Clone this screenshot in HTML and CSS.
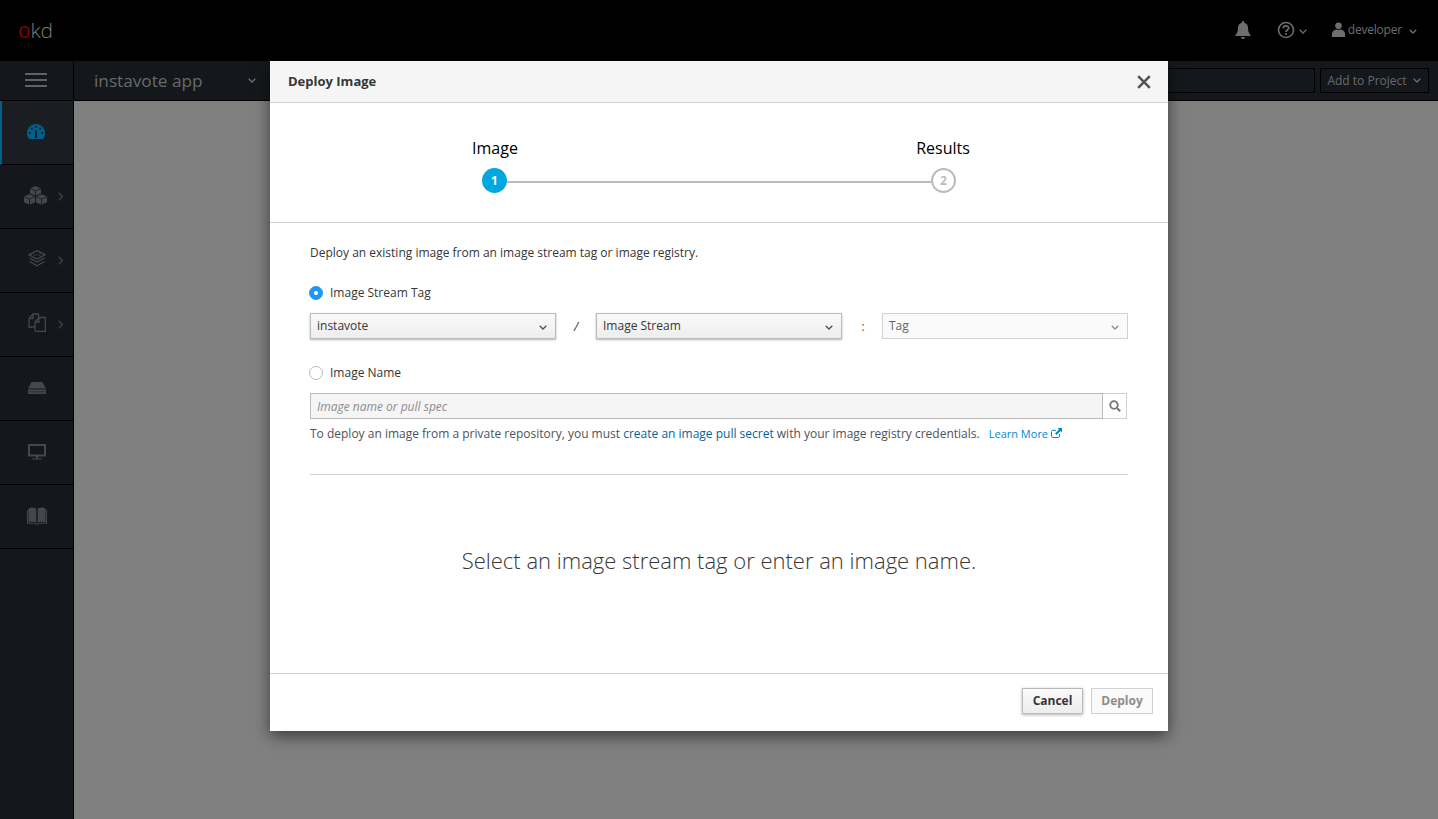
FILE: index.html
```html
<!DOCTYPE html>
<html lang="en">
<head>
<meta charset="utf-8">
<title>Deploy Image</title>
<link rel="stylesheet" href="styles.css">
</head>
<body>
<div class="page">
  <header class="topbar">
    <div class="logo"><span class="logo-o">o</span>kd</div>
    <div class="top-actions">
      <svg class="bell" viewBox="0 0 16 18" width="16" height="18"><path fill="#6e6e6e" d="M8 0c-.7 0-1.2.5-1.2 1.2v.6C4.300 2.400 3 4.400 3 6.800c0 3.700-.8 5.500-2.600 7.200v1h15.200v-1C13.800 12.300 13 10.500 13 6.800c0-2.400-1.300-4.400-3.800-5V1.200C9.200.5 8.700 0 8 0zM6 16c0 1.100.9 2 2 2s2-.9 2-2z"/></svg>
      <span class="help-group">
        <svg viewBox="0 0 18 18" width="18" height="18"><circle cx="9" cy="9" r="7.500" fill="none" stroke="#6e6e6e" stroke-width="1.600"/><path fill="none" stroke="#6e6e6e" stroke-width="1.700" d="M6.300 7.200c0-3.200 5.400-3.200 5.400-.1 0 2-2.700 1.900-2.700 4"/><rect x="8.100" y="12" width="1.800" height="1.800" fill="#6e6e6e"/></svg>
        <svg class="chev" viewBox="0 0 8 5" width="8" height="5"><path d="M.7.700 4 4 7.300.7" fill="none" stroke="#6e6e6e" stroke-width="1.300"/></svg>
      </span>
      <span class="user-group">
        <svg viewBox="0 0 13 15" width="13" height="15"><circle cx="6.500" cy="3.700" r="3.300" fill="#6e6e6e"/><path fill="#6e6e6e" d="M0 15v-3.500C0 9 2.500 7.600 4.500 7.400c1.200.6 2.800.6 4 0 2 .2 4.500 1.600 4.500 4.100V15z"/></svg>
        <span class="user-name">developer</span>
        <svg class="chev" viewBox="0 0 8 5" width="8" height="5"><path d="M.7.700 4 4 7.300.7" fill="none" stroke="#6e6e6e" stroke-width="1.300"/></svg>
      </span>
    </div>
  </header>
  <div class="subbar">
    <div class="burger-cell"><span class="burger"></span></div>
    <div class="project">
      <span class="project-name">instavote app</span>
      <svg class="chev" viewBox="0 0 8 5" width="8" height="5"><path d="M.7.700 4 4 7.300.7" fill="none" stroke="#6e6e6e" stroke-width="1.300"/></svg>
    </div>
    <div class="sub-tools">
      <div class="search-box"></div>
      <div class="add-btn">Add to Project
        <svg class="chev" viewBox="0 0 8 5" width="8" height="5"><path d="M.7.700 4 4 7.300.7" fill="none" stroke="#6e6e6e" stroke-width="1.300"/></svg>
      </div>
    </div>
  </div>
  <div class="main">
    <nav class="sidebar">
      <div class="nav-item active">
        <svg viewBox="0 0 18 15" width="18" height="15"><path fill="#00608c" d="M9 0C4 0 0 4 0 9c0 2.200.8 4.300 2.100 5.900h13.800C17.200 13.300 18 11.200 18 9c0-5-4-9-9-9z"/><g fill="#14181c"><circle cx="9" cy="2.700" r="1"/><circle cx="4.700" cy="4.600" r="1"/><circle cx="13.300" cy="4.600" r="1"/><circle cx="2.800" cy="9" r="1"/><circle cx="15.200" cy="9" r="1"/><path d="M8.300 6h1.400l.4 6.200a1.200 1.200 0 1 1-2.200 0z"/></g></svg>
      </div>
      <div class="nav-item">
        <svg class="icon-cubes" viewBox="0 0 23 19" width="23" height="19"><g fill="#44474b"><path d="M11.500 0 17 2.400v5L11.500 9.800 6 7.400v-5z"/><path d="M5.500 8.200 11 10.600v5.600l-5.500 2.600L0 16.200v-5.600z"/><path d="M17.500 8.200 23 10.600v5.600l-5.500 2.600-5.500-2.600v-5.600z"/></g><g fill="none" stroke="#14181c" stroke-width=".8"><path d="M6 2.400 11.500 4.800 17 2.400M11.500 4.800v5M0 10.600l5.500 2.400 5.500-2.400M5.500 13v5.800M12 10.600l5.500 2.400 5.500-2.400M17.500 13v5.800"/></g></svg>
        <svg class="nav-chev" viewBox="0 0 5 9" width="5" height="9"><path d="M.7.700 4.300 4.500.7 8.300" fill="none" stroke="#44474b" stroke-width="1.200"/></svg>
      </div>
      <div class="nav-item">
        <svg class="icon-up" viewBox="0 0 18 17" width="18" height="17"><g fill="none" stroke="#44474b" stroke-width="1.300"><path d="M9 .7 17 4.800 9 9 1 4.800z"/><path d="M1.500 8 9 12l7.500-4"/><path d="M1.500 11.500 9 15.800l7.500-4.300"/></g><g fill="#44474b"><rect x="5.500" y="4.300" width="1.500" height="1.200"/><rect x="8.300" y="4.300" width="1.500" height="1.200"/><rect x="11" y="4.300" width="1.500" height="1.200"/></g></svg>
        <svg class="nav-chev" viewBox="0 0 5 9" width="5" height="9"><path d="M.7.700 4.300 4.500.7 8.300" fill="none" stroke="#44474b" stroke-width="1.200"/></svg>
      </div>
      <div class="nav-item">
        <svg class="icon-up" viewBox="0 0 18 19" width="18" height="19"><g fill="none" stroke="#44474b" stroke-width="1.300"><path d="M7 14H1V5.500L5 1h5.500v3.500"/><path d="M7 15V9l4-4.500h6.300v13.800H8.300A1.300 1.300 0 0 1 7 17z"/><path d="M5 1v4.500H1M11 4.500V9H7"/></g></svg>
        <svg class="nav-chev" viewBox="0 0 5 9" width="5" height="9"><path d="M.7.700 4.300 4.500.7 8.300" fill="none" stroke="#44474b" stroke-width="1.200"/></svg>
      </div>
      <div class="nav-item">
        <svg viewBox="0 0 18 12" width="18" height="12"><path fill="#44474b" d="M3.500 0h11L18 6.500H0zM0 7.500h18V12H0z"/><path stroke="#14181c" stroke-width="1" stroke-dasharray="1 1" d="M1.500 9.800h15"/></svg>
      </div>
      <div class="nav-item">
        <svg viewBox="0 0 18 16" width="18" height="16"><path fill="#44474b" fill-rule="evenodd" d="M0 0h18v12.500H0zM2 2v8.500h14V2zM8 12.500h2V14.500H8zM4 14.500h10V15.500H4z"/></svg>
      </div>
      <div class="nav-item">
        <svg viewBox="0 0 20 18" width="20" height="18"><path fill="#44474b" d="M1.500 1.500C4 .2 7 .3 9.300 1.800v14C7 14.600 4 14.500 1.500 15.500zM18.500 1.500C16 .2 13 .3 10.700 1.800v14c2.300-1.200 5.300-1.300 7.800-.3z"/><path fill="none" stroke="#44474b" stroke-width="1" d="M.5 3v13.500c3-.6 6-.6 9.500.8 3.500-1.400 6.500-1.400 9.500-.8V3"/></svg>
      </div>
    </nav>
    <div class="backdrop-area"></div>
  </div>

  <section class="modal">
    <div class="modal-head">
      <h1 class="modal-title">Deploy Image</h1>
      <svg class="close" viewBox="0 0 14 14" width="14" height="14"><path d="M1.200 1.200 12.800 12.800M12.800 1.200 1.200 12.800" stroke="#555" stroke-width="2.600"/></svg>
    </div>
    <div class="wizard">
      <div class="step">
        <div class="step-label">Image</div>
        <div class="bubble bubble-on">1</div>
      </div>
      <div class="wizard-line"></div>
      <div class="step">
        <div class="step-label">Results</div>
        <div class="bubble bubble-off">2</div>
      </div>
    </div>
    <div class="modal-body">
      <p class="intro">Deploy an existing image from an image stream tag or image registry.</p>
      <div class="radio-row">
        <span class="radio radio-on"></span>
        <span>Image Stream Tag</span>
      </div>
      <div class="select-row">
        <div class="select select-active"><span>instavote</span><svg class="chev" viewBox="0 0 8 5" width="8" height="5"><path d="M.7.700 4 4 7.300.7" fill="none" stroke="#4d5258" stroke-width="1.300"/></svg></div>
        <span class="sep sep-slash">/</span>
        <div class="select select-active"><span>Image Stream</span><svg class="chev" viewBox="0 0 8 5" width="8" height="5"><path d="M.7.700 4 4 7.300.7" fill="none" stroke="#4d5258" stroke-width="1.300"/></svg></div>
        <span class="sep sep-colon">:</span>
        <div class="select select-dis"><span>Tag</span><svg class="chev" viewBox="0 0 8 5" width="8" height="5"><path d="M.7.700 4 4 7.300.7" fill="none" stroke="#8b8d8f" stroke-width="1.300"/></svg></div>
      </div>
      <div class="radio-row radio-row-2">
        <span class="radio"></span>
        <span>Image Name</span>
      </div>
      <div class="image-input">
        <div class="image-field">Image name or pull spec</div>
        <div class="image-search"><svg viewBox="0 0 12 12" width="12" height="12"><circle cx="5" cy="5" r="3.800" fill="none" stroke="#72767b" stroke-width="1.800"/><path d="M8 8l3.200 3.200" stroke="#72767b" stroke-width="2"/></svg></div>
      </div>
      <p class="hint">To deploy an image from a private repository, you must <a class="link">create an image pull secret</a> with your image registry credentials. <a class="link learn">Learn More <svg viewBox="0 0 11 10" width="11" height="10"><path fill="none" stroke="#0088ce" stroke-width="1" d="M8.500 6v2.200c0 .7-.5 1.300-1.200 1.300H1.800C1.100 9.500.5 9 .5 8.200V3.500c0-.7.600-1.200 1.300-1.200H5"/><path fill="#0088ce" d="M6.500 0H11v4.500L9.500 3 5.500 7 4 5.500l4-4z"/></svg></a></p>
      <div class="rule"></div>
      <div class="message">Select an image stream tag or enter an image name.</div>
    </div>
    <div class="modal-foot">
      <button class="btn btn-cancel">Cancel</button>
      <button class="btn btn-deploy">Deploy</button>
    </div>
  </section>
</div>
</body>
</html>
```
FILE: styles.css
```css
* { box-sizing: border-box; }
html, body { margin: 0; padding: 0; height: 100%; }
body { font-family: "Open Sans", "Noto Sans", sans-serif; font-size: 12px; color: #363636; background: #808080; overflow: hidden; }
.page { position: relative; width: 1438px; height: 819px; display: flex; flex-direction: column; }

.topbar { height: 61px; background: #000; display: flex; align-items: center; justify-content: space-between; flex: none; }
.logo { margin-left: 18px; font-family: "Open Sans", sans-serif; font-size: 21px; font-weight: 300; letter-spacing: -.2px; line-height: 1; color: #7b7b7b; margin-top: -1px; }
.logo-o { color: #8b0000; font-weight: 400; }
.top-actions { display: flex; align-items: center; margin-right: 21px; margin-top: -2px; color: #6e6e6e; }
.bell { margin-right: 26px; }
.help-group { display: flex; align-items: center; gap: 4px; margin-right: 25px; }
.help-group .chev { margin-top: 3px; }
.user-group { display: flex; align-items: center; }
.user-name { margin-left: 3px; margin-right: 7px; font-size: 12px; letter-spacing: -.2px; }
.user-group .chev { margin-top: 3px; }

.subbar { height: 40px; background: #14181c; border-bottom: 1px solid #000; display: flex; flex: none; }
.burger-cell { width: 74px; border-right: 1px solid #000; display: flex; align-items: center; justify-content: center; padding-right: 1px; padding-bottom: 1px; }
.burger { display: block; width: 22px; height: 14px; border-top: 2px solid #5f6163; border-bottom: 2px solid #5f6163; position: relative; }
.burger::after { content: ""; position: absolute; left: 0; right: 0; top: 4px; height: 2px; background: #5f6163; }
.project { width: 196px; padding-left: 20px; padding-right: 14px; display: flex; align-items: center; justify-content: space-between; }
.project-name { font-size: 17.200px; color: #696a6b; line-height: 1; margin-top: 1px; }
.sub-tools { flex: 1; display: flex; align-items: center; justify-content: flex-end; padding-right: 9px; gap: 5px; }
.search-box { width: 300px; height: 25px; border: 1px solid #000; background: #14181c; }
.add-btn { width: 109px; height: 25px; border: 1px solid #000; display: flex; align-items: center; justify-content: center; gap: 6px; padding-right: 1px; color: #6a6a6a; font-size: 12px; }

.main { flex: 1; display: flex; min-height: 0; }
.sidebar { width: 74px; flex: none; background: #14181c; border-right: 1px solid #000; }
.nav-item { height: 64px; padding-bottom: 2px; border-bottom: 1px solid #000; display: flex; align-items: center; justify-content: center; position: relative; }
.nav-item.active { background: #1a1e23; border-left: 2px solid #00608c; padding-right: 3px; }
.nav-chev { position: absolute; right: 10px; top: 27px; }
.icon-cubes { margin-left: -2px; }
.icon-up { margin-top: -2px; }
.backdrop-area { flex: 1; background: #808080; }

.modal { position: absolute; left: 270px; top: 61px; width: 898px; height: 670px; background: #fff; box-shadow: 0 5px 15px rgba(0,0,0,.55); display: flex; flex-direction: column; }
.modal-head { height: 42px; flex: none; background: #f5f5f5; border-bottom: 1px solid #d1d1d1; display: flex; align-items: center; justify-content: space-between; padding: 0 17px 0 18px; }
.modal-title { margin: 0; font-size: 13px; font-weight: 700; color: #363636; line-height: 1; }
.wizard { height: 120px; flex: none; border-bottom: 1px solid #d1d1d1; display: flex; justify-content: center; align-items: flex-start; padding-top: 34px; }
.step { width: 64px; display: flex; flex-direction: column; align-items: center; }
.step-label { font-size: 16px; line-height: 22px; color: #000; white-space: nowrap; height: 22px; }
.bubble { width: 25px; height: 25px; border-radius: 50%; margin-top: 9px; margin-left: -1px; display: flex; align-items: center; justify-content: center; font-size: 12px; font-weight: 700; position: relative; }
.bubble-on { background: #00a8e1; color: #fff; }
.bubble-off { background: #fff; border: 2px solid #bbb; color: #bbb; margin-left: 1px; }
.wizard-line { width: 424px; height: 2px; background: #bbb; margin: 44px -20px 0; }
.modal-body { flex: 1; padding: 0 40px; min-height: 0; }
.intro { margin: 21px 0 0; line-height: 17px; color: #363636; }
.radio-row { display: flex; align-items: center; gap: 7px; height: 18px; margin-top: 22px; }
.radio-row-2 { margin-top: 24px; }
.radio { width: 14px; height: 14px; border-radius: 50%; border: 1px solid #bbb; background: #fff; flex: none; margin-top: 2px; margin-left: -1px; }
.radio-on { background: #2196f3; border-color: #2196f3; position: relative; }
.radio-on::after { content: ""; position: absolute; left: 4px; top: 4px; width: 4px; height: 4px; background: #fff; border-radius: 50%; }
.select-row { display: grid; grid-template-columns: 246px 40px 246px 40px 246px; margin-top: 12px; align-items: center; }
.select { height: 26px; padding: 0 8px 1px 6px; display: flex; align-items: center; justify-content: space-between; border: 1px solid #bbb; }
.select-active { background: linear-gradient(#fafafa, #ededed); box-shadow: 0 1px 2px rgba(0,0,0,.3); color: #363636; }
.select-dis { background: #fafafa; color: #666; border-color: #d1d1d1; }
.select .chev { margin-top: 3px; }
.sep { text-align: center; color: #4d5258; font-size: 12px; }
.sep-slash { color: #363636; font-style: italic; }
.sep-colon { padding-left: 2px; }
.image-input { display: flex; margin-top: 12px; height: 26px; width: 817px; }
.image-field { flex: 1; background: #f5f5f5; border: 1px solid #bbb; font-style: italic; color: #8b8d8f; padding: 1px 0 0 6px; line-height: 24px; }
.image-search { width: 24px; border: 1px solid #d1d1d1; border-left: 0; display: flex; align-items: center; justify-content: center; background: #fff; }
.hint { margin: 6px 0 0; line-height: 17px; color: #4d5258; }
.link { color: #00659c; }
.learn { font-size: 11px; margin-left: 6px; color: #0088ce; }
.rule { height: 1px; background: #d1d1d1; margin-top: 32px; width: 818px; }
.message { margin-top: 70px; text-align: center; font-size: 22px; font-weight: 300; line-height: 30px; color: #363636; }
.modal-foot { height: 58px; flex: none; border-top: 1px solid #d1d1d1; display: flex; justify-content: flex-end; align-items: flex-start; gap: 8px; padding: 14px 15px 0 0; }
.btn { height: 26px; font: 700 12px "Open Sans", sans-serif; border: 1px solid #bbb; padding: 0; }
.btn-cancel { width: 61px; background: linear-gradient(#fafafa, #ededed); color: #363636; box-shadow: 0 1px 3px rgba(0,0,0,.3); padding-bottom: 1px; }
.btn-deploy { width: 62px; background: #fafafa; color: #8b8d8f; border-color: #d1d1d1; padding-bottom: 1px; }
```
